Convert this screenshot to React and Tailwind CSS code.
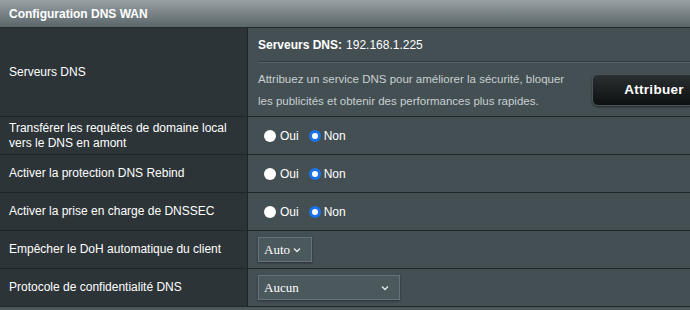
const rows = [
  "Transférer les requêtes de domaine local vers le DNS en amont",
  "Activer la protection DNS Rebind",
  "Activer la prise en charge de DNSSEC",
];

function Radio({ checked }) {
  return checked ? (
    <span className="inline-block shrink-0 w-[12px] h-[12px] rounded-full bg-white border-[3px] border-[#1a73e8] box-border" />
  ) : (
    <span className="inline-block shrink-0 w-[12px] h-[12px] rounded-full bg-white" />
  );
}

function YesNo() {
  return (
    <div className="flex items-center text-[12px] text-white ml-[4px]">
      <Radio />
      <span className="ml-[4px]">Oui</span>
      <span className="ml-[10px] flex">
        <Radio checked />
      </span>
      <span className="ml-[3px]">Non</span>
    </div>
  );
}

function Select({ value, width }) {
  return (
    <div
      className={`${width} h-[25px] flex items-center justify-between pl-[5px] pr-[10px] bg-[#4b585c] border border-[#66737a] shadow-[0_1px_2px_rgba(0,0,0,0.4)] text-white text-[13px] font-['Liberation_Serif',serif]`}
    >
      <span>{value}</span>
      <svg width="8" height="6" viewBox="0 0 8 6" fill="none" stroke="#e6e9ea" strokeWidth="1.3">
        <path d="M1 1.5 L4 4.5 L7 1.5" />
      </svg>
    </div>
  );
}

function Row({ label, children }) {
  return (
    <div className="flex h-[38px] border-b border-[#1f2629]">
      <div className="w-[248px] shrink-0 bg-[#2c3437] border-r border-[#1d2427] flex items-center pl-[9px] pr-2 text-[12px] leading-[15px] text-white">
        {label}
      </div>
      <div className="flex-1 bg-[#434f53] flex items-center pl-[12px]">{children}</div>
    </div>
  );
}

export default function App() {
  return (
    <div className="w-[690px] h-[310px] bg-[#4d585c] font-['Liberation_Sans',Arial,sans-serif] overflow-hidden">
      {/* Header */}
      <div className="h-[28px] bg-gradient-to-b from-[#98a1a4] to-[#5b666a] border-b border-[#22292c] flex items-center pl-[9px] text-white text-[12px] font-bold">
        Configuration DNS WAN
      </div>

      {/* Serveurs DNS */}
      <div className="flex h-[89px] border-b border-[#1f2629]">
        <div className="w-[248px] shrink-0 bg-[#2c3437] border-r border-[#1d2427] flex items-center pl-[9px] text-[12px] text-white">
          Serveurs DNS
        </div>
        <div className="flex-1 bg-[#434f53] pl-[10px] flex flex-col">
          <div className="h-[34px] flex items-center text-[12px] text-white pt-[1px] border-b border-[#333d41] shadow-[0_1px_0_#56636a]">
            <span className="font-bold">Serveurs DNS:</span>
            <span className="ml-[4px]">192.168.1.225</span>
          </div>
          <div className="flex-1 flex items-center justify-between">
            <p className="text-[11.5px] leading-[22px] text-[#c8cfd1] w-[320px] pt-[2px]">
              Attribuez un service DNS pour améliorer la sécurité, bloquer les publicités et obtenir des performances plus rapides.
            </p>
            <button className="w-[124px] h-[32px] mt-[2px] mr-[-26px] rounded-[6px] bg-gradient-to-b from-[#2a2f31] to-[#0e1112] border border-[#4a5458] text-white font-bold text-[13.5px] tracking-[0.3px] shadow-[0_1px_2px_rgba(0,0,0,0.5)]">
              Attribuer
            </button>
          </div>
        </div>
      </div>

      {rows.map((r) => (
        <Row key={r} label={r}>
          <YesNo />
        </Row>
      ))}

      <Row label="Empêcher le DoH automatique du client">
        <div className="ml-[-2px]">
          <Select value="Auto" width="w-[54px]" />
        </div>
      </Row>
      <Row label="Protocole de confidentialité DNS">
        <div className="ml-[-2px]">
          <Select value="Aucun" width="w-[142px]" />
        </div>
      </Row>
    </div>
  );
}
